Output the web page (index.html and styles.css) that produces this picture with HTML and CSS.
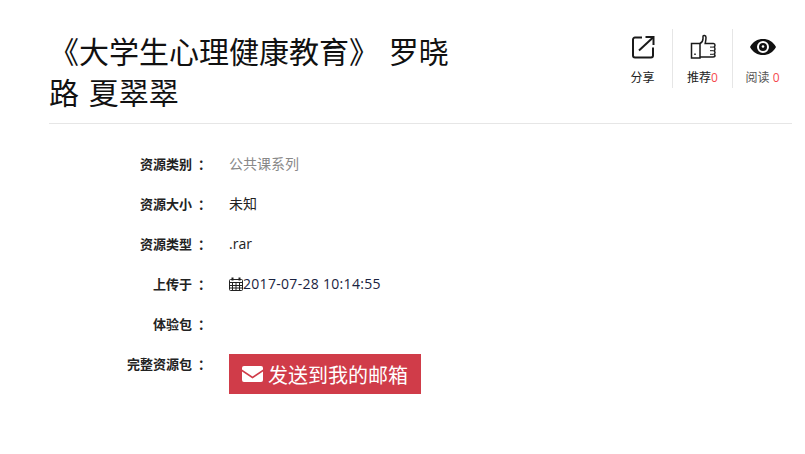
FILE: index.html
```html
<!DOCTYPE html>
<html lang="zh-CN">
<head>
    <meta charset="UTF-8">
    <title>《大学生心理健康教育》 罗晓路 夏翠翠</title>
    <link rel="stylesheet" href="styles.css">
</head>
<body>
    <div class="container">
        <div class="header">
            <h1 class="title">《大学生心理健康教育》 罗晓路 夏翠翠</h1>
            <div class="actions">
                <div class="action">
                    <svg class="action-icon" width="26" height="26" viewBox="0 0 26 26" fill="none" stroke="#1a1a1a" stroke-width="2">
                        <path d="M12 3.500H5a2 2 0 0 0-2 2v16a2 2 0 0 0 2 2h16a2 2 0 0 0 2-2v-8"/>
                        <path d="M9 16.500L23 3.500"/>
                        <path d="M15.500 3h8v8"/>
                    </svg>
                    <span class="action-label">分享</span>
                </div>
                <div class="action">
                    <svg class="action-icon" width="26" height="26" viewBox="0 0 26 26" fill="none" stroke="#1a1a1a" stroke-width="1.500">
                        <path d="M1.500 9.500H10v14.500H1.500z"/>
                        <path d="M10 9.500c2-1 3-3 3-5V2.500c0-1.500 3-1.500 3 1 0 2-.3 4-.8 6h8.300c1 0 1.500 .7 1.500 1.800s-.5 1.800-1.500 1.800c1 0 1.500 .7 1.500 1.800s-.5 1.800-1.500 1.800c1 0 1.500 .7 1.500 1.800s-.5 1.800-1.500 1.800c1 0 1.500 .5 1.500 1.200s-.5 1.500-2 1.500H10"/>
                        <path d="M20 13.100h3.500M20 16.700h3.500M20 20.300h3.500" stroke-width="1"/>
                        <path d="M5 19.500v1.500"/>
                    </svg>
                    <span class="action-label">推荐<span class="count">0</span></span>
                </div>
                <div class="action">
                    <svg class="action-icon" width="26" height="26" viewBox="0 0 26 26">
                        <path fill="#111" fill-rule="evenodd" d="M0 13C3 7.500 7.500 5 13 5s10 2.500 13 8c-3 5.500-7.500 8-13 8S3 18.500 0 13zm13-6a6 6 0 1 0 0 12 6 6 0 0 0 0-12z"/>
                        <circle cx="13" cy="13" r="4" fill="#111"/>
                        <circle cx="13" cy="12.500" r="1.300" fill="#fff"/>
                    </svg>
                    <span class="action-label muted">阅读 <span class="count">0</span></span>
                </div>
            </div>
        </div>

        <div class="info">
            <div class="row">
                <div class="label">资源类别<span class="colon">：</span></div>
                <div class="value gray">公共课系列</div>
            </div>
            <div class="row">
                <div class="label">资源大小<span class="colon">：</span></div>
                <div class="value">未知</div>
            </div>
            <div class="row">
                <div class="label">资源类型<span class="colon">：</span></div>
                <div class="value">.rar</div>
            </div>
            <div class="row">
                <div class="label">上传于<span class="colon">：</span></div>
                <div class="value date">
                    <svg width="14" height="14" viewBox="0 0 14 14" fill="none" stroke="#222" stroke-width="1">
                        <rect x="0.500" y="2.500" width="13" height="11" rx="1"/>
                        <path d="M0.500 5.500h13M0.500 8.500h13M0.500 11h13M3.500 5.500v8M7 5.500v8M10.500 5.500v8"/>
                        <path d="M3.500 0.500v3M10.500 0.500v3" stroke-width="2"/>
                    </svg>2017-07-28 10:14:55
                </div>
            </div>
            <div class="row">
                <div class="label">体验包<span class="colon">：</span></div>
                <div class="value"></div>
            </div>
            <div class="row">
                <div class="label">完整资源包<span class="colon">：</span></div>
                <div class="value">
                    <button class="send-btn">
                        <svg width="21" height="16" viewBox="0 0 21 16">
                            <path fill="#fff" d="M2 0h17a2 2 0 0 1 2 2v1.500l-10.500 7L0 3.500V2a2 2 0 0 1 2-2z"/>
                            <path fill="#fff" d="M0 5.500l10.500 7 10.500-7V14a2 2 0 0 1-2 2H2a2 2 0 0 1-2-2z"/>
                        </svg>
                        发送到我的邮箱
                    </button>
                </div>
            </div>
        </div>
    </div>
</body>
</html>
```

FILE: styles.css
```css
body {
    margin: 0;
    background-color: #fff;
    color: #222;
    font-family: "Open Sans", "Noto Sans CJK SC", sans-serif;
    font-size: 14px;
}
.container {
    width: 743px;
    margin-left: 49px;
}
.header {
    display: flex;
    justify-content: space-between;
    align-items: flex-start;
    height: 92px;
    padding-top: 31px;
    border-bottom: 1px solid #e6e6e6;
}
.title {
    width: 420px;
    margin: 0;
    font-size: 30px;
    font-weight: 400;
    line-height: 41px;
    word-spacing: 2px;
    color: #111;
}
.actions {
    display: flex;
    margin-top: -2px;
}
.action {
    display: flex;
    flex-direction: column;
    align-items: center;
    width: 59px;
    height: 59px;
    border-left: 1px solid #e6e6e6;
}
.action:first-child {
    border-left: none;
}
.action-icon {
    margin-top: 5px;
}
.action-label {
    margin-top: 10px;
    font-size: 12px;
    line-height: 16px;
    color: #222;
}
.muted {
    color: #555;
}
.count {
    color: #f5484d;
}
.info {
    padding-top: 30px;
}
.row {
    display: flex;
    height: 40px;
    line-height: 20px;
}
.label {
    width: 162px;
    text-align: right;
    font-size: 13px;
    font-weight: 700;
    color: #222;
}
.colon {
    margin-left: 6px;
}
.value {
    margin-left: 18px;
    color: #222;
}
.gray {
    color: #888;
}
.date {
    letter-spacing: .3px;
    color: #1a2340;
}
.date svg {
    vertical-align: -2px;
}
.send-btn {
    display: flex;
    align-items: center;
    gap: 5px;
    height: 40px;
    padding: 0 13px;
    border: none;
    background-color: #d03c49;
    color: #fff;
    font-family: inherit;
    font-size: 20px;
}
```
